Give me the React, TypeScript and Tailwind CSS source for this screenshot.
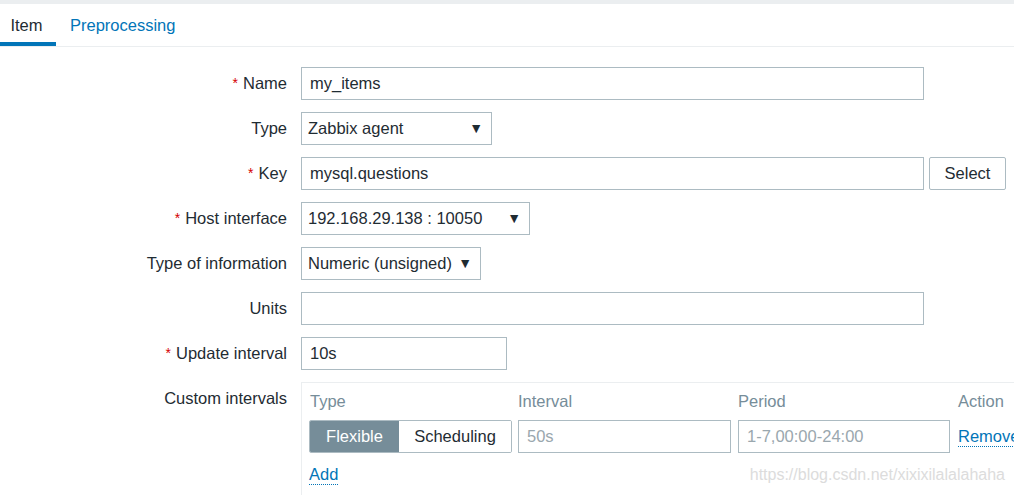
import React from "react";

const Req = () => <span className="mr-[5px] text-[14px] text-[#d40000]">*</span>;

const Label = ({ children, req }: { children: React.ReactNode; req?: boolean }) => (
  <div className="flex h-[33px] w-[287px] shrink-0 items-center justify-end">
    {req && <Req />}
    <span>{children}</span>
  </div>
);

const Input = ({ value, w, placeholder }: { value?: string; w: string; placeholder?: boolean }) => (
  <div
    className={`flex h-[33px] shrink-0 items-center border border-[#acbbc2] bg-white px-[8px] ${w} ${
      placeholder ? "text-[#9aa7ae]" : "text-[#1f2c33]"
    }`}
  >
    {value}
  </div>
);

const SelectBox = ({ value, w }: { value: string; w: string }) => (
  <div className={`flex h-[33px] items-center justify-between border border-[#acbbc2] bg-white pl-[6px] pr-[8px] ${w}`}>
    <span>{value}</span>
    <span className="text-[14px] text-[#1f2c33]">▼</span>
  </div>
);

const Row = ({ label, req, children }: { label: string; req?: boolean; children: React.ReactNode }) => (
  <div className="flex items-start gap-[14px]">
    <Label req={req}>{label}</Label>
    {children}
  </div>
);

export default function App() {
  return (
    <div className="relative h-[495px] w-[1014px] overflow-hidden bg-white font-['Liberation_Sans',Arial,sans-serif] text-[16.5px] text-[#1f2c33]">
      <div className="h-[4px] bg-[#ebeef0]" />
      <div className="flex h-[43px] border-b border-[#ebeef0]">
        <div className="flex w-[56px] items-center justify-center border-b-[4px] border-[#0275b8] pt-[4px] pr-[3px]">Item</div>
        <div className="ml-[14px] flex items-center text-[#0275b8]">Preprocessing</div>
      </div>

      <div className="flex flex-col gap-[12px] pt-[20px]">
        <Row label="Name" req>
          <Input value="my_items" w="w-[623px]" />
        </Row>
        <Row label="Type">
          <SelectBox value="Zabbix agent" w="w-[191px]" />
        </Row>
        <Row label="Key" req>
          <div className="flex gap-[5px]">
            <Input value="mysql.questions" w="w-[623px]" />
            <button className="h-[33px] w-[77px] rounded-[2px] border border-[#acbbc2] bg-white text-[#1f2c33]">
              Select
            </button>
          </div>
        </Row>
        <Row label="Host interface" req>
          <SelectBox value="192.168.29.138 : 10050" w="w-[229px]" />
        </Row>
        <Row label="Type of information">
          <SelectBox value="Numeric (unsigned)" w="w-[180px]" />
        </Row>
        <Row label="Units">
          <Input w="w-[623px]" />
        </Row>
        <Row label="Update interval" req>
          <Input value="10s" w="w-[206px]" />
        </Row>
        <Row label="Custom intervals">
          <div className="w-[760px] shrink-0 border border-[#ebeef0] px-[7px] pt-[7px] pb-[10px]">
            <div className="flex h-[22px] items-center text-[#768d99]">
              <div className="w-[209px] shrink-0 pl-[1px]">Type</div>
              <div className="w-[220px] shrink-0">Interval</div>
              <div className="w-[220px] shrink-0">Period</div>
              <div>Action</div>
            </div>
            <div className="mt-[8px] flex items-center">
              <div className="flex h-[33px] w-[203px] shrink-0 overflow-hidden rounded-[2px] border border-[#acbbc2]">
                <div className="flex w-[89px] items-center justify-center bg-[#768d99] text-white">Flexible</div>
                <div className="flex flex-1 items-center justify-center bg-white">Scheduling</div>
              </div>
              <div className="ml-[6px]">
                <Input value="50s" w="w-[213px]" placeholder />
              </div>
              <div className="ml-[7px]">
                <Input value="1-7,00:00-24:00" w="w-[212px]" placeholder />
              </div>
              <span className="ml-[8px] shrink-0 border-b border-dotted border-[#0275b8] leading-[19px] text-[#0275b8]">
                Remove
              </span>
            </div>
            <div className="mt-[12px] flex items-center">
              <span className="border-b border-dotted border-[#0275b8] leading-[19px] text-[#0275b8]">Add</span>
            </div>
          </div>
        </Row>
      </div>

      <span className="pointer-events-none absolute right-[9px] bottom-[8px] text-[16px] text-[#dcdcdc]">
        https://blog.csdn.net/xixixilalalahaha
      </span>
    </div>
  );
}
